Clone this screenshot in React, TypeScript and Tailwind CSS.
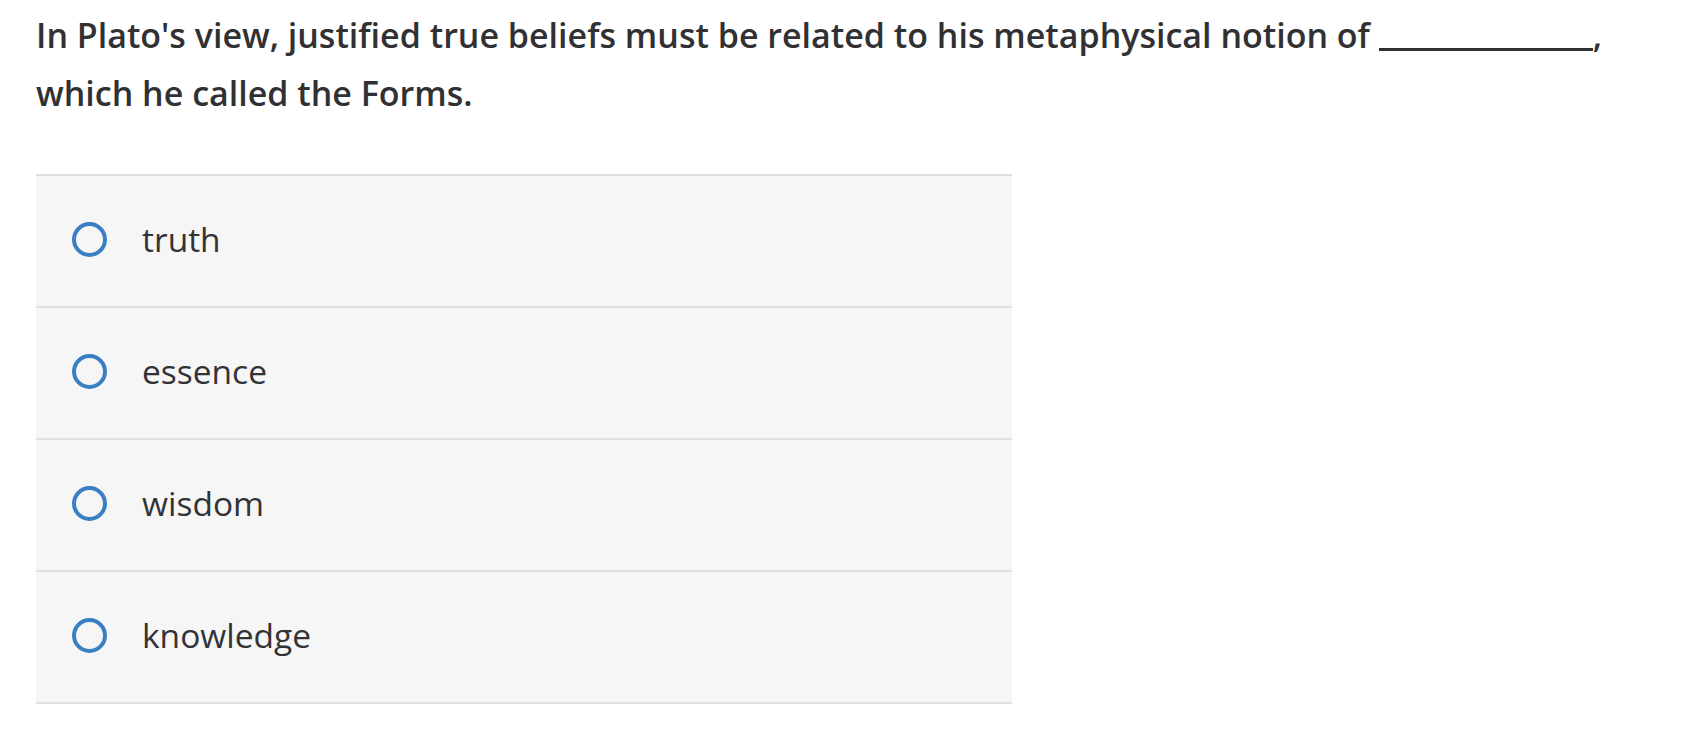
import React from "react";

const options = ["truth", "essence", "wisdom", "knowledge"];

export default function App() {
  return (
    <div className="min-h-[740px] bg-white pl-[36px] pr-[50px] pt-[6px] text-[#313134]" style={{ fontFamily: "'Open Sans', Lato, sans-serif" }}>
      <p className="text-[34px] leading-[58px] font-semibold">
        In Plato's view, justified true beliefs must be related to his metaphysical notion of{" "}
        <span className="inline-block w-[214px] border-b-[3px] border-[#313134] mb-[-3px]"></span>, which he called the Forms.
      </p>
      <div className="mt-[52px] w-[976px] border-t-2 border-[#e0e0e4]">
        {options.map((o) => (
          <div key={o} className="h-[132px] bg-[#f6f6f6] border-b-2 border-[#e0e0e4] flex items-center pl-[36px] pb-[3px]">
            <span className="w-[35px] h-[35px] rounded-full border-4 border-[#3a7fc1] shrink-0"></span>
            <span className="ml-[35px] text-[33.5px] text-[#333336]">{o}</span>
          </div>
        ))}
      </div>
    </div>
  );
}
